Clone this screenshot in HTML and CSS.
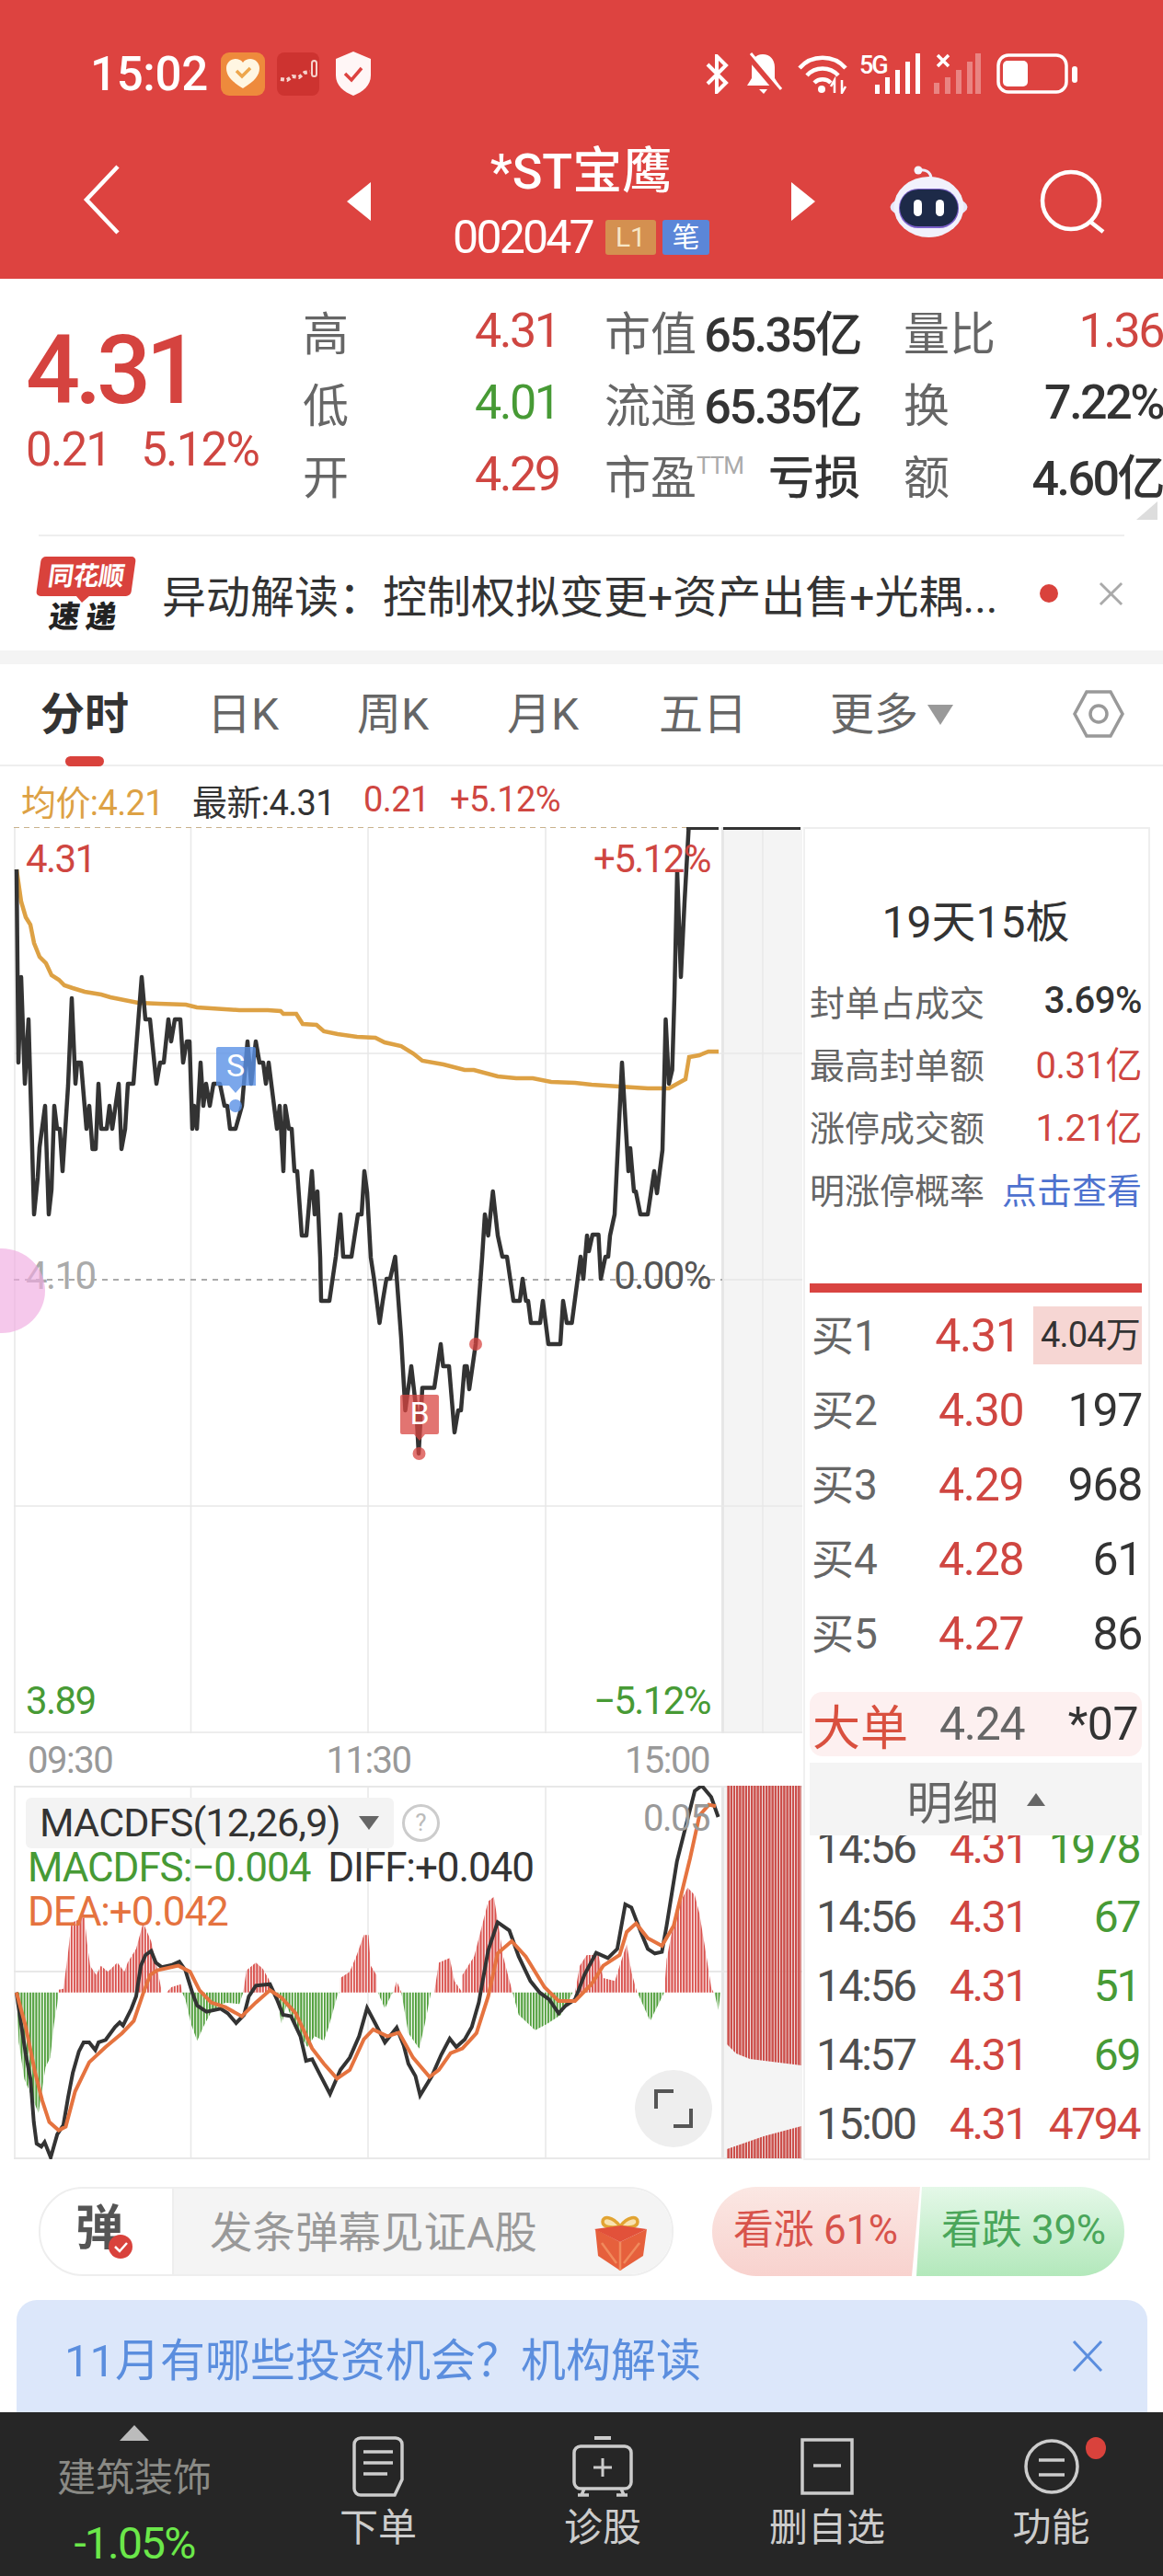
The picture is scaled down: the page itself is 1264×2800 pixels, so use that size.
FILE: index.html
```html
<!DOCTYPE html>
<html lang="zh-CN">
<head>
  <meta charset="UTF-8" />
  <meta name="viewport" content="width=device-width, initial-scale=1" />
  <title>*ST宝鹰 002047</title>
  <link rel="stylesheet" href="styles.css">
</head>
<body>
  <div class="float-ball"></div>

  <header class="header">
    <div class="status-bar">
      <span class="clock">15:02</span>
      <svg class="app-icon" viewBox="0 0 48 47"><rect width="48" height="47" rx="9" fill="#ee8a3c"/><path d="M24 39C11 31 6 25 6 17c0-6 5-10 10-10 3 0 6 1 8 4 2-3 5-4 8-4 5 0 10 4 10 10 0 8-5 14-18 22z" fill="#fff6e2"/><path d="M17 20l6 6 9-9" fill="none" stroke="#eda64c" stroke-width="3.500"/></svg>
      <svg class="app-icon app-icon-dark" viewBox="0 0 46 47"><rect width="46" height="47" rx="8" fill="#cd3330"/><path d="M4 29l7 1 6-4 7 1 6-5 6-1" fill="none" stroke="#f6d3cd" stroke-width="4" stroke-dasharray="4 3"/><rect x="38" y="9" width="5" height="17" rx="2.500" fill="none" stroke="#f6d3cd" stroke-width="2"/></svg>
      <svg class="shield" viewBox="0 0 42 48"><path d="M21 0l19 8v18c0 11-9 18-19 22C11 44 2 37 2 26V8z" fill="#fff6f6"/><path d="M12 24l7 7 11-13" fill="none" stroke="#dd4340" stroke-width="3.500"/></svg>
      <div class="status-right">
        <svg class="st-bt" viewBox="0 0 29 43"><path d="M4 11l20 20-10 10V2l10 10L4 32" fill="none" stroke="#fff" stroke-width="4"/></svg>
        <svg class="st-bell" viewBox="0 0 42 46"><path d="M20 2c8 0 13 6 13 14v12l5 8H3l5-8V16C8 8 12 2 20 2z" fill="#fff"/><path d="M16 40h9l-4 5z" fill="#fff"/><path d="M4 3l33 39" stroke="#dd4340" stroke-width="7"/><path d="M7 1l33 39" stroke="#fff" stroke-width="3"/></svg>
        <svg class="st-wifi" viewBox="0 0 56 43"><path d="M2 15c13-15 37-15 50 0M10 23c9-10 25-10 34 0M18 31c5-5 13-5 18 0" fill="none" stroke="#fff" stroke-width="4.500"/><circle cx="26" cy="38" r="4" fill="#fff"/><path d="M40 42V28l-4 7M48 28v14l4-7" fill="none" stroke="#fff" stroke-width="2.500"/></svg>
        <svg class="st-signal" viewBox="0 0 66 44"><text x="0" y="22" class="st-5g">5G</text><path d="M17 34h5v10h-5zM28 26h5v18h-5zM39 18h5v26h-5zM50 9h5v35h-5zM61 0h5v44h-5z" fill="#fff"/></svg>
        <svg class="st-signal2" viewBox="0 0 51 44"><path d="M4 2l12 12M16 2L4 14" stroke="#fff" stroke-width="3.500"/><path d="M0 32h6v12H0zM12 26h6v18h-6zM24 18h6v26h-6zM36 9h6v35h-6zM45 0h6v44h-6z" fill="#fff" opacity=".35"/></svg>
        <svg class="st-battery" viewBox="0 0 88 44"><rect x="2" y="2" width="74" height="40" rx="11" fill="none" stroke="#fff" stroke-width="3.500"/><rect x="7" y="8" width="27" height="28" rx="5" fill="#fff"/><rect x="82" y="14" width="6" height="18" rx="3" fill="#fff"/></svg>
      </div>
    </div>
    <nav class="nav">
      <svg class="nav-back" viewBox="0 0 41 76"><path d="M38 2L4 38l34 36" fill="none" stroke="#fff" stroke-width="4.500"/></svg>
      <svg class="nav-arrow nav-prev" viewBox="0 0 26 42"><path d="M26 0v42L0 21z" fill="#fff"/></svg>
      <div class="stock-title">
        <div class="stock-name">*ST宝鹰</div>
        <div class="stock-code">002047<span class="tag tag-l1">L1</span><span class="tag tag-bi">笔</span></div>
      </div>
      <svg class="nav-arrow nav-next" viewBox="0 0 26 42"><path d="M0 0v42l26-21z" fill="#fff"/></svg>
      <svg class="nav-robot" viewBox="0 0 85 78"><path d="M45 13C44 7 39 4 32 5" fill="none" stroke="#eef" stroke-width="3"/><circle cx="31" cy="5" r="4.500" fill="#f4f4ff"/><ellipse cx="42.500" cy="45" rx="42" ry="14" fill="#e6e6f8"/><ellipse cx="42.500" cy="45" rx="38" ry="33" fill="#f1f1fc"/><rect x="10" y="25" width="65" height="43" rx="21" fill="#7a5fc8"/><rect x="11" y="26" width="63" height="40" rx="20" fill="#1d2a48"/><rect x="26" y="37" width="9" height="18" rx="4.500" fill="#fff"/><rect x="50" y="37" width="9" height="18" rx="4.500" fill="#fff"/></svg>
      <svg class="nav-search" viewBox="0 0 71 70"><circle cx="34" cy="34" r="31" fill="none" stroke="#fff" stroke-width="4.500"/><path d="M55 57l14 11" stroke="#fff" stroke-width="4.500"/></svg>
    </nav>
  </header>

  <section class="quote">
    <div class="last">
      <div class="last-price">4.31</div>
      <div class="last-change"><span>0.21</span><span>5.12%</span></div>
    </div>
    <div class="quote-grid">
      <span class="q-label">高</span><span class="q-val red">4.31</span>
      <div class="q-pair"><span class="q-label">市值</span><span class="q-val dark">65.35亿</span></div>
      <div class="q-pair"><span class="q-label">量比</span><span class="q-val red">1.36</span></div>
      <span class="q-label">低</span><span class="q-val green">4.01</span>
      <div class="q-pair"><span class="q-label">流通</span><span class="q-val dark">65.35亿</span></div>
      <div class="q-pair"><span class="q-label">换</span><span class="q-val dark">7.22%</span></div>
      <span class="q-label">开</span><span class="q-val red">4.29</span>
      <div class="q-pair"><span class="q-label">市盈<sup class="ttm">TTM</sup></span><span class="q-val dark q-loss">亏损</span></div>
      <div class="q-pair"><span class="q-label">额</span><span class="q-val dark">4.60亿</span></div>
    </div>
    <div class="corner-fold"></div>
  </section>

  <section class="news">
    <div class="news-logo">
      <div class="logo-top">同花顺</div>
      <div class="logo-bottom">速递</div>
    </div>
    <div class="news-text">异动解读&#xFF1A;控制权拟变更+资产出售+光耦...</div>
    <span class="news-dot"></span>
    <svg class="news-close" viewBox="0 0 28 28"><path d="M2 2l24 24M26 2L2 26" stroke="#aaa" stroke-width="3"/></svg>
  </section>

  <div class="tabs">
    <div class="tab tab-active">分时</div>
    <div class="tab tab-day">日K</div>
    <div class="tab tab-week">周K</div>
    <div class="tab tab-month">月K</div>
    <div class="tab tab-five">五日</div>
    <div class="tab tab-more">更多<i class="caret"></i></div>
    <svg class="tab-setting" viewBox="0 0 56 54"><path d="M15 3h26l13 24-13 24H15L2 27z" fill="none" stroke="#999" stroke-width="3.500"/><circle cx="28" cy="27" r="9" fill="none" stroke="#999" stroke-width="3.500"/></svg>
  </div>

  <div class="info-line">
    <span class="info-avg">均价:4.21</span>
    <span class="info-new">最新:4.31</span>
    <span class="info-chg">0.21</span>
    <span class="info-pct">+5.12%</span>
  </div>

  <main class="market">
    <div class="chart-col">
      <div class="price-chart">
        <svg class="chart-svg" viewBox="15 899 858 985">
          <rect x="786" y="899" width="86" height="985" fill="#f4f4f4"/>
          <path d="M785.500 899V1884" stroke="#e6e6e6" stroke-width="3"/>
          <path d="M16 899V1884M207.500 899V1884M400 899V1884M593 899V1884M829 899V1884" stroke="#e8e8e8" stroke-width="1.500"/>
          <path d="M15 1145H872M15 1637H872M15 1883H872" stroke="#e8e8e8" stroke-width="1.500"/>
          <path d="M15 1391H785" stroke="#aaa" stroke-width="2" stroke-dasharray="6 6"/>
          <path d="M785 1391H872" stroke="#e6e6e6" stroke-width="1.500"/>
          <path d="M15 899H746" stroke="#c9b28c" stroke-width="2" stroke-dasharray="6 5"/>
          <path d="M746 900H781M786 900H870" stroke="#333" stroke-width="4"/>
          <polyline class="line-avg" points="18,945 23,980 28,997 33,1005 37,1025 43,1040 50,1047 56,1060 64,1065 70,1071 79,1074 92,1078 110,1081 120,1084 130,1086 150,1090 173,1091 202,1092 214,1095 260,1098 291,1098 305,1099 308,1102 322,1102 329,1113 344,1114 352,1121 367,1124 388,1127 408,1128 418,1133 436,1137 449,1145 459,1153 482,1157 505,1163 515,1163 541,1170 561,1172 579,1172 599,1176 625,1177 643,1179 673,1181 704,1183 727,1183 745,1173 749,1149 760,1147 770,1143 781,1143"/>
          <polyline class="line-price" points="18,945 20,1155 23,1062 27,1178 31,1108 34,1213 37,1320 41,1280 43,1247 49,1202 53,1320 56,1293 59,1202 62,1227 65,1227 68,1273 74,1180 78,1085 82,1178 84,1155 88,1155 94,1227 97,1202 100.500,1249 104,1249 107,1178 110,1227 116,1227 119,1202 122,1227 129,1178 132,1249 136,1227 139,1178 145,1178 154,1062 158,1108 163,1108 170,1178 174,1155 178,1155 183,1108 186,1132 190,1108 196,1108 199,1155 203,1132 206,1132 209,1227 211,1202 214,1227 218,1155 221,1202 224,1178 228,1202 232,1178 239,1178 244,1202 247,1202 250,1227 256,1227 263,1202 269,1132 273,1178 278,1132 282,1155 286,1155 289,1178 292,1155 301,1227 304,1202 308,1273 310,1202 314,1227 317,1227 320,1273 323,1273 328,1343 333,1343 339,1273 342,1320 345,1295 348,1367 349,1414 358,1414 365,1366 370,1320 373,1366 382,1366 389,1320 393,1320 396,1273 399,1296 403,1367 406.500,1390 412.500,1438 416,1414 420,1390 424,1390 429.500,1366 436,1454 440.500,1533 447,1485 452.500,1533 455,1580 459,1508.500 472,1508.500 479,1461 481.600,1485 488,1485 494,1557 498,1533 501,1533 505,1485 507.400,1485 510,1510 517,1461 524,1367 527,1320 530.600,1343 535.700,1295 541,1343 546,1366 551,1366 558,1414 565,1414 568,1390 571.600,1414 574,1414 577,1438 587,1438 590,1414 596,1461 609,1461 612,1414 616,1438 621.500,1438 631,1366 634,1390 638,1343 640,1360 644,1342 650.500,1342 653,1390 658,1366 661,1366 663,1343 668,1320 676,1155 683,1273 685,1248 689,1295 691,1295 696,1320 704,1320 711,1273 714,1297 720,1250 723.500,1108 727,1178 730.600,1163 733,1083 736,947 740,1062 744,980 748.500,900"/>
          <g class="mark-sell">
            <path d="M237 1138h39a2 2 0 0 1 2 2v40h-15l-7 8-7-8h-14v-40a2 2 0 0 1 2-2z"/>
            <circle cx="256" cy="1202" r="7"/>
          </g>
          <text x="256" y="1170" class="mark-text">S</text>
          <g class="mark-buy">
            <path d="M437 1516h38a2 2 0 0 1 2 2v39a2 2 0 0 1-2 2h-13l-6 7-6-7h-13a2 2 0 0 1-2-2v-39a2 2 0 0 1 2-2z"/>
            <circle cx="455.500" cy="1580" r="7"/>
            <circle cx="517" cy="1461" r="7"/>
          </g>
          <text x="456" y="1548" class="mark-text">B</text>
        </svg>
        <span class="axis-label label-tl red">4.31</span>
        <span class="axis-label label-tr red">+5.12%</span>
        <span class="axis-label label-ml">4.10</span>
        <span class="axis-label label-mr">0.00%</span>
        <span class="axis-label label-bl green">3.89</span>
        <span class="axis-label label-br green">&minus;5.12%</span>
      </div>

      <div class="time-axis">
        <span>09:30</span><span>11:30</span><span>15:00</span>
      </div>

      <div class="macd-chart">
        <svg class="chart-svg" viewBox="15 1941 858 406">
          <defs>
            <pattern id="barsRed" width="6.270" height="10" patternUnits="userSpaceOnUse"><rect width="4.200" height="10" fill="#d9524e"/></pattern>
            <pattern id="barsGreen" width="6.270" height="10" patternUnits="userSpaceOnUse"><rect width="4" height="10" fill="#4f9e3a"/></pattern>
            <pattern id="barsSide" width="3.200" height="10" patternUnits="userSpaceOnUse"><rect width="2.400" height="10" fill="#cc4f4b"/></pattern>
          </defs>
          <rect x="786" y="1941" width="86" height="406" fill="#f4f4f4"/>
          <path d="M785.500 1941V2347" stroke="#e6e6e6" stroke-width="3"/>
          <path d="M16 1941V2346M207.500 1941V2346M400 1941V2346M593 1941V2346" stroke="#e8e8e8" stroke-width="1.500"/>
          <path d="M15 1942H872M15 2143H872M15 2346H872" stroke="#e8e8e8" stroke-width="2"/>
          <path fill="url(#barsSide)" d="M790 1941H871V2245L815 2238L800 2232L790 2222z"/>
          <path fill="url(#barsSide)" d="M790 2346V2336L830 2322L871 2311V2346z"/>
          <g transform="translate(0 1880) scale(.5102 .3333)">
            <path fill="url(#barsRed)" d="M125 857V848L135 845L145 728L152 630L180 612L185 690L192 770L205 800L215 770L230 790L250 760L265 790L272 760L290 715L305 630L322 690L335 780L345 857zM355 857L365 840L385 830L388 857zM518 857L525 785L545 760L560 780L573 815L578 857zM725 857V810L745 790L760 735L775 670L785 670L790 770L802 800V857zM838 857L845 820L855 857zM925 857L935 760L958 745L968 820L985 857V800L1010 740L1025 650L1040 560L1052 545L1060 620L1072 740L1082 800L1092 857zM1225 857L1235 770L1250 735L1275 735L1285 810L1310 820L1320 770L1335 700L1345 790L1357 857zM1415 857L1420 750L1440 590L1465 515L1480 540L1490 600L1505 740L1515 840L1520 857z"/>
            <path fill="url(#barsGreen)" d="M35 857L40 1020L52 1140L82 1250L90 1170L97 1100L107 1070L115 960L122 895L125 857zM388 857L395 880L407 960L420 1015L433 970L450 920L480 890L510 895L518 857zM578 857L590 880L600 960L610 900L640 1000L655 1035L670 1000L690 1015L700 970L720 860L725 857zM805 857L820 910L835 860L838 857zM855 857L870 990L893 1040L905 960L918 857zM1092 857L1105 930L1140 980L1165 960L1195 930L1220 857zM1358 857L1385 950L1415 857zM1522 857L1530 915L1535 857z"/>
            <polyline class="line-diff" points="35,857 45,960 55,1060 65,1140 72,1280 78,1350 88,1360 95,1345 108,1395 122,1320 135,1290 145,1200 155,1120 168,1050 178,1020 190,1020 203,1045 210,1020 225,1012 245,970 255,955 262,965 280,910 290,870 300,770 310,735 322,722 332,760 345,775 365,768 382,757 395,785 410,860 420,900 440,920 470,910 485,925 503,957 520,930 530,870 545,835 575,830 590,880 603,930 620,935 640,1000 652,1080 665,1075 680,1120 703,1188 725,1110 745,1070 765,1000 782,908 800,960 820,1020 845,972 860,1030 870,1090 885,1130 895,1193 920,1130 940,1060 958,1008 972,1035 990,1010 1005,970 1020,890 1040,720 1060,628 1085,655 1105,740 1130,820 1150,858 1170,880 1190,925 1205,900 1225,880 1245,800 1270,728 1295,745 1315,715 1332,570 1345,580 1365,660 1380,715 1395,730 1410,725 1420,640 1442,430 1465,290 1480,200 1495,183 1515,220 1530,285"/>
            <polyline class="line-dea" points="35,857 55,970 75,1120 90,1210 105,1280 125,1307 140,1295 160,1180 190,1085 225,1035 260,990 285,950 305,860 320,800 335,785 380,770 405,790 425,850 450,890 480,905 515,935 545,890 575,850 600,875 630,925 665,1040 690,1090 718,1138 745,1110 775,1010 795,978 825,1000 850,988 880,1070 915,1133 935,1110 960,1055 985,1040 1015,990 1040,870 1060,730 1090,690 1120,740 1160,840 1190,885 1225,885 1260,830 1285,770 1320,735 1335,660 1355,632 1380,680 1410,705 1435,640 1470,420 1490,280 1510,245 1525,250"/>
          </g>
        </svg>
        <div class="macd-select">MACDFS(12,26,9)<i class="caret caret-small"></i></div>
        <span class="macd-help">?</span>
        <div class="macd-values">
          <span class="green">MACDFS:&minus;0.004</span><span class="dark">DIFF:+0.040</span>
          <span class="macd-dea">DEA:+0.042</span>
        </div>
        <span class="macd-top">0.05</span>
        <div class="expand-btn">
          <svg viewBox="0 0 44 44"><path d="M22 3H3v19M22 41h19V22" fill="none" stroke="#555" stroke-width="4"/></svg>
        </div>
      </div>
    </div>

    <aside class="side-panel">
      <div class="limit-title">19天15板</div>
      <div class="limit-rows">
        <div class="limit-row"><span>封单占成交</span><b class="dark">3.69%</b></div>
        <div class="limit-row"><span>最高封单额</span><b class="red">0.31亿</b></div>
        <div class="limit-row"><span>涨停成交额</span><b class="red">1.21亿</b></div>
        <div class="limit-row"><span>明涨停概率</span><b class="blue">点击查看</b></div>
      </div>
      <div class="book">
        <div class="book-row"><span class="book-label">买1</span><span class="book-price">4.31</span><span class="book-vol book-vol-top">4.04万</span></div>
        <div class="book-row"><span class="book-label">买2</span><span class="book-price">4.30</span><span class="book-vol">197</span></div>
        <div class="book-row"><span class="book-label">买3</span><span class="book-price">4.29</span><span class="book-vol">968</span></div>
        <div class="book-row"><span class="book-label">买4</span><span class="book-price">4.28</span><span class="book-vol">61</span></div>
        <div class="book-row"><span class="book-label">买5</span><span class="book-price">4.27</span><span class="book-vol">86</span></div>
      </div>
      <div class="big-order"><span class="big-label">大单</span><span class="big-price">4.24</span><span class="big-vol">*07</span></div>
      <div class="detail-head">明细<i class="caret caret-up"></i></div>
      <div class="ticks">
        <div class="tick tick-cut"><span>14:56</span><span class="red">4.31</span><span class="green">1978</span></div>
        <div class="tick"><span>14:56</span><span class="red">4.31</span><span class="green">67</span></div>
        <div class="tick"><span>14:56</span><span class="red">4.31</span><span class="green">51</span></div>
        <div class="tick"><span>14:57</span><span class="red">4.31</span><span class="green">69</span></div>
        <div class="tick"><span>15:00</span><span class="red">4.31</span><span class="red">4794</span></div>
      </div>
    </aside>
  </main>

  <section class="comment-row">
    <div class="danmu">
      <div class="danmu-key">弹<svg class="danmu-badge" viewBox="0 0 26 26"><circle cx="13" cy="13" r="13" fill="#d9423c"/><path d="M7 13l5 5 8-9" fill="none" stroke="#fff" stroke-width="2.500"/></svg></div>
      <div class="danmu-input">
        <span>发条弹幕见证A股</span>
        <svg class="gift" viewBox="0 0 58 60">
          <path d="M28 12C20 1 9 0 9 7c0 6 10 7 19 5zM28 12C36 1 47 0 47 7c0 6-10 7-19 5z" fill="#f9e3b0" stroke="#e2a432" stroke-width="3.500"/>
          <path d="M1 15l3 29 24 16 25-16 4-29-29 14z" fill="#e6603c"/>
          <path d="M0 15l29-4 28 4-29 14z" fill="#e2513a"/>
          <path d="M28 29v31M8 30l16 22M49 30L32 52" stroke="#f08a5c" stroke-width="2.500" fill="none"/>
        </svg>
      </div>
    </div>
    <div class="vote">
      <div class="vote-up">看涨 61%</div>
      <div class="vote-down">看跌 39%</div>
    </div>
  </section>

  <div class="banner">
    <span>11月有哪些投资机会&#xFF1F;机构解读</span>
    <svg class="banner-close" viewBox="0 0 36 36"><path d="M3 2l30 32M33 2L3 34" stroke="#5b8ede" stroke-width="3"/></svg>
  </div>

  <footer class="bottom-bar">
    <div class="sector">
      <i class="caret caret-up caret-light"></i>
      <div class="sector-name">建筑装饰</div>
      <div class="sector-pct">-1.05%</div>
    </div>
    <div class="bar-item">
      <svg class="bar-icon" viewBox="0 0 56 66"><path d="M9 2h38a7 7 0 0 1 7 7v38l-8 17H9a7 7 0 0 1-7-7V9a7 7 0 0 1 7-7z" fill="none" stroke="#ccc" stroke-width="3.500"/><path d="M12 17h32M12 29h32M12 41h26" stroke="#ccc" stroke-width="3.500"/></svg>
      <span>下单</span>
    </div>
    <div class="bar-item">
      <svg class="bar-icon" viewBox="0 0 66 66"><path d="M24 2h18" stroke="#ccc" stroke-width="4"/><rect x="2" y="11" width="62" height="46" rx="7" fill="none" stroke="#ccc" stroke-width="3.500"/><path d="M33 24v20M23 34h20" stroke="#ccc" stroke-width="3"/><path d="M10 64l3-7M56 64l-3-7M6 64h12M48 64h12" stroke="#ccc" stroke-width="3.500"/></svg>
      <span>诊股</span>
    </div>
    <div class="bar-item">
      <svg class="bar-icon" viewBox="0 0 58 66"><rect x="2" y="4" width="54" height="58" fill="none" stroke="#ccc" stroke-width="3.500"/><path d="M14 32h30" stroke="#ccc" stroke-width="3.500"/></svg>
      <span>删自选</span>
    </div>
    <div class="bar-item">
      <svg class="bar-icon" viewBox="0 0 60 66"><circle cx="30" cy="33" r="28" fill="none" stroke="#ccc" stroke-width="3.500"/><path d="M16 26h28M16 42h28" stroke="#ccc" stroke-width="3.500"/></svg>
      <span>功能</span>
      <i class="bar-dot"></i>
    </div>
  </footer>
</body>
</html>
```

FILE: styles.css
```css
* {
  box-sizing: border-box;
}
body {
  margin: 0;
  width: 1264px;
  height: 2800px;
  overflow: hidden;
  position: relative;
  background: #fff;
  color: #333;
  font-family: Roboto, "Noto Sans CJK SC", sans-serif;
}
.red { color: #cf4641; }
.green { color: #479a35; }
.dark { color: #333; }
.blue { color: #4e72cf; }
svg { display: block; }

.float-ball {
  position: absolute;
  left: -46px;
  top: 1357px;
  width: 95px;
  height: 92px;
  border-radius: 50%;
  background: rgba(240, 170, 225, 0.65);
  z-index: 5;
}

/* header */
.header {
  height: 303px;
  padding-top: 56px;
  background: #dd4340;
  color: #fff;
}
.status-bar {
  height: 48px;
  padding-left: 98px;
  display: flex;
  align-items: center;
}
.clock {
  width: 142px;
  font-size: 51px;
  font-weight: 500;
  letter-spacing: -0.300px;
}
.app-icon { width: 48px; height: 47px; }
.app-icon-dark { width: 46px; margin-left: 13px; }
.shield { width: 42px; height: 48px; margin-left: 16px; }
.status-right {
  margin-left: 360px;
  display: flex;
  align-items: center;
}
.st-bt { width: 29px; height: 43px; }
.st-bell { width: 42px; height: 46px; margin-left: 15px; }
.st-wifi { width: 56px; height: 43px; margin-left: 16px; }
.st-signal { width: 66px; height: 44px; margin-left: 11px; overflow: visible; }
.st-5g { font-size: 27px; font-weight: 500; fill: #fff; letter-spacing: -2px; }
.st-signal2 { width: 51px; height: 44px; margin-left: 15px; }
.st-battery { width: 88px; height: 44px; margin-left: 17px; }

.nav {
  height: 122px;
  margin-top: 54px;
  padding-left: 90px;
  display: flex;
  align-items: center;
}
.nav-back { width: 41px; height: 76px; margin-top: -4px; }
.nav-arrow { width: 26px; height: 42px; }
.nav-prev { margin-left: 246px; }
.stock-title { width: 457px; text-align: center; }
.stock-name {
  font-size: 54px;
  font-weight: 500;
  line-height: 60px;
  margin-top: -2px;
}
.stock-code {
  margin-top: 19px;
  font-size: 50px;
  line-height: 44px;
  letter-spacing: -2.800px;
  display: flex;
  justify-content: center;
  align-items: center;
}
.tag {
  width: 55px;
  height: 38px;
  margin-left: 14px;
  font-size: 30px;
  line-height: 38px;
  letter-spacing: 0;
  border-radius: 3px;
  text-align: center;
}
.tag-l1 { background: #d49050; color: #f7e6c6; }
.tag-bi { width: 51px; margin-left: 7px; background: #5b86d8; }
.nav-robot { width: 85px; height: 78px; margin-left: 81px; }
.nav-search { width: 71px; height: 70px; margin-left: 78px; }

/* quote */
.quote {
  height: 278px;
  padding: 17px 0 0 28px;
  display: flex;
  position: relative;
}
.last { width: 301px; }
.last-price {
  margin-top: 38px;
  font-size: 104px;
  line-height: 90px;
  font-weight: 500;
  letter-spacing: -5.500px;
  color: #d5433f;
}
.last-change {
  margin-top: 11px;
  font-size: 51px;
  line-height: 60px;
  letter-spacing: -1.800px;
  color: #cf4641;
  display: flex;
  gap: 33px;
}
.quote-grid {
  display: grid;
  grid-template-columns: 187px 141px 325px 282px;
  grid-auto-rows: 78px;
  align-items: center;
}
.q-label {
  font-size: 50px;
  color: #666;
  white-space: nowrap;
}
.q-val {
  font-size: 52px;
  letter-spacing: -2.500px;
  white-space: nowrap;
}
.q-val.dark { font-weight: 500; }
.q-pair {
  display: flex;
  justify-content: space-between;
  align-items: center;
}
.quote-grid .q-pair:nth-child(4n+3) { padding-right: 47px; }
.q-loss { letter-spacing: 0; font-size: 50px; }
.ttm {
  font-size: 26px;
  color: #aaa;
  vertical-align: 22px;
  line-height: 0;
  letter-spacing: -1px;
}
.corner-fold {
  position: absolute;
  right: 6px;
  top: 242px;
  width: 23px;
  height: 20px;
  background: #ddd;
  clip-path: polygon(100% 0, 100% 100%, 0 100%);
}

/* news */
.news {
  height: 126px;
  margin: 0 42px;
  border-top: 2px solid #eee;
  display: flex;
  align-items: center;
  position: relative;
}
.news-logo { width: 103px; margin-top: 2px; }
.logo-top {
  height: 43px;
  background: #d9423c;
  border-radius: 5px;
  color: #fff;
  font-size: 28px;
  font-weight: 700;
  line-height: 43px;
  text-align: center;
  letter-spacing: -0.500px;
  transform: skewX(-8deg);
  position: relative;
}
.logo-top::after {
  content: "";
  position: absolute;
  left: 44px;
  top: 43px;
  width: 14px;
  height: 7px;
  background: #d9423c;
  clip-path: polygon(0 0, 100% 0, 50% 100%);
}
.logo-bottom {
  margin-top: 6px;
  color: #222;
  font-size: 33px;
  font-weight: 900;
  line-height: 34px;
  text-align: center;
  letter-spacing: 7px;
  transform: skewX(-8deg);
}
.news-text {
  width: 930px;
  margin-left: 31px;
  font-size: 48px;
  white-space: nowrap;
  color: #333;
}
.news-dot {
  width: 20px;
  height: 20px;
  margin-left: 24px;
  border-radius: 50%;
  background: #d9423c;
}
.news-close { width: 27px; height: 27px; margin-left: 44px; }

/* tabs */
.tabs {
  height: 126px;
  border-top: 15px solid #f4f4f4;
  border-bottom: 2px solid #eee;
  position: relative;
}
.tab {
  position: absolute;
  top: 28px;
  font-size: 48px;
  line-height: 54px;
  color: #666;
  white-space: nowrap;
}
.tab-active {
  left: 44px;
  font-weight: 700;
  color: #333;
}
.tab-active::after {
  content: "";
  position: absolute;
  left: 27px;
  top: 72px;
  width: 42px;
  height: 11px;
  border-radius: 6px;
  background: #d9423c;
}
.tab-day { left: 225px; }
.tab-week { left: 388px; }
.tab-month { left: 551px; }
.tab-five { left: 716px; }
.tab-more { left: 902px; display: flex; align-items: center; }
.tab-setting {
  position: absolute;
  left: 1166px;
  top: 27px;
  width: 56px;
  height: 54px;
}
.caret {
  display: block;
  width: 0;
  height: 0;
  margin-left: 10px;
  border-left: 14px solid transparent;
  border-right: 14px solid transparent;
  border-top: 22px solid #999;
}
.caret-small {
  margin-left: 20px;
  border-left-width: 11px;
  border-right-width: 11px;
  border-top: 15px solid #666;
}
.caret-up {
  margin-left: 30px;
  border-left-width: 10px;
  border-right-width: 10px;
  border-top: 0;
  border-bottom: 14px solid #666;
}

.info-line {
  height: 66px;
  padding: 6px 0 0 23px;
  display: flex;
  align-items: center;
  font-size: 38px;
  letter-spacing: -0.600px;
}
.info-avg { width: 186px; color: #dda144; }
.info-new { width: 186px; color: #333; }
.info-chg { width: 94px; color: #cf4641; }
.info-pct { color: #cf4641; }

/* chart + side panel */
.market {
  height: 1449px;
  margin-left: 15px;
  display: flex;
}
.chart-col { width: 858px; }
.price-chart {
  height: 985px;
  position: relative;
}
.chart-svg { width: 100%; height: 100%; }
.line-price {
  fill: none;
  stroke: #333;
  stroke-width: 4.500;
  stroke-linejoin: round;
}
.line-avg {
  fill: none;
  stroke: #dda144;
  stroke-width: 4.500;
}
.mark-sell { fill: rgba(90, 145, 230, 0.8); }
.mark-buy { fill: rgba(216, 70, 66, 0.75); }
.mark-text {
  font-size: 34px;
  fill: #fff;
  text-anchor: middle;
}
.axis-label {
  position: absolute;
  font-size: 42px;
  line-height: 50px;
  letter-spacing: -1.600px;
}
.label-tl { left: 13px; top: 10px; }
.label-tr { right: 101px; top: 10px; }
.label-ml { left: 13px; top: 463px; color: #aaa; }
.label-mr { right: 101px; top: 463px; color: #555; }
.label-bl { left: 13px; top: 925px; }
.label-br { right: 101px; top: 925px; }

.time-axis {
  height: 57px;
  padding: 2px 102px 0 15px;
  display: flex;
  justify-content: space-between;
  align-items: center;
  font-size: 40px;
  letter-spacing: -1.500px;
  color: #999;
}
.macd-chart {
  height: 406px;
  position: relative;
}
.macd-chart .chart-svg { position: absolute; left: 0; top: 0; }
.line-diff,
.line-dea {
  fill: none;
  stroke-width: 4;
  vector-effect: non-scaling-stroke;
}
.line-diff { stroke: #333; }
.line-dea { stroke: #e5733f; }
.macd-select {
  position: absolute;
  left: 13px;
  top: 13px;
  width: 400px;
  height: 55px;
  padding-left: 15px;
  background: #f3f3f3;
  border-radius: 6px;
  font-size: 43px;
  line-height: 55px;
  letter-spacing: -0.800px;
  color: #333;
  display: flex;
  align-items: center;
}
.macd-help {
  position: absolute;
  left: 422px;
  top: 20px;
  width: 41px;
  height: 41px;
  border: 3px solid #ccc;
  border-radius: 50%;
  font-size: 26px;
  line-height: 35px;
  text-align: center;
  color: #bbb;
}
.macd-values {
  position: absolute;
  left: 15px;
  top: 65px;
  width: 640px;
  font-size: 44px;
  line-height: 48px;
  letter-spacing: -1.100px;
}
.macd-values .dark { margin-left: 19px; }
.macd-dea { display: block; color: #e5733f; }
.macd-top {
  position: absolute;
  right: 102px;
  top: 11px;
  font-size: 40px;
  line-height: 50px;
  letter-spacing: -1.500px;
  color: #999;
}
.expand-btn {
  position: absolute;
  left: 675px;
  top: 309px;
  width: 84px;
  height: 84px;
  border-radius: 50%;
  background: #eee;
  display: flex;
  align-items: center;
  justify-content: center;
}
.expand-btn svg { width: 44px; height: 44px; }

.side-panel {
  width: 377px;
  padding: 0 7px 0 5px;
  border: 2px solid #eee;
  border-left-color: #f0f0f0;
  background: #fff;
  overflow: hidden;
}
.limit-title {
  margin-top: 72px;
  font-size: 48px;
  line-height: 60px;
  text-align: center;
  color: #333;
}
.limit-rows { margin-top: 20px; }
.limit-row {
  height: 68px;
  display: flex;
  justify-content: space-between;
  align-items: center;
  font-size: 38px;
  color: #666;
  white-space: nowrap;
}
.limit-row b { font-weight: 400; font-size: 40px; letter-spacing: -0.500px; }
.limit-row b.blue { font-size: 38px; letter-spacing: 0; }
.limit-row b.dark { font-weight: 500; }
.book {
  margin-top: 70px;
  padding-top: 6px;
  border-top: 10px solid #d94441;
}
.book-row {
  height: 81px;
  display: flex;
  align-items: center;
  position: relative;
}
.book-label {
  width: 140px;
  padding-left: 2px;
  font-size: 46px;
  line-height: 56px;
  color: #666;
}
.book-price {
  width: 110px;
  font-size: 50px;
  letter-spacing: -1.300px;
  color: #cf4641;
}
.book-vol {
  margin-left: auto;
  font-size: 50px;
  letter-spacing: -1.300px;
  color: #333;
}
.book-vol-top {
  width: 121px;
  height: 63px;
  margin-left: auto;
  background: #f6d6d3;
  font-size: 38px;
  line-height: 63px;
  text-align: right;
  letter-spacing: -0.800px;
  padding-right: 2px;
}
.big-order {
  height: 70px;
  margin-top: 23px;
  padding-left: 3px;
  padding-right: 4px;
  background: #fdf0f0;
  border-radius: 14px;
  display: flex;
  align-items: center;
}
.big-label { width: 138px; font-size: 52px; color: #d9503f; }
.big-price { font-size: 50px; letter-spacing: -1.300px; color: #666; }
.big-vol { margin-left: auto; font-size: 50px; color: #333; letter-spacing: -0.500px; }
.detail-head {
  height: 79px;
  margin-top: 7px;
  background: #f4f4f4;
  font-size: 50px;
  color: #666;
  display: flex;
  align-items: center;
  justify-content: center;
  position: relative;
  z-index: 1;
}
.ticks { padding: 0 3px 0 7px; }
.tick {
  height: 75px;
  display: grid;
  grid-template-columns: 145px 1fr auto;
  align-items: center;
  font-size: 48px;
  letter-spacing: -2.400px;
  color: #4f4f4f;
}
.tick-cut { margin-top: -24px; }

/* comment row */
.comment-row {
  height: 97px;
  margin: 29px 0 0 42px;
  display: flex;
}
.danmu {
  width: 690px;
  border: 2px solid #eee;
  border-radius: 48px;
  display: flex;
  overflow: hidden;
}
.danmu-key {
  width: 145px;
  font-size: 52px;
  font-weight: 700;
  color: #555;
  padding: 1px 0 0 38px;
  border-right: 2px solid #eee;
  position: relative;
}
.danmu-badge {
  position: absolute;
  left: 74px;
  top: 50px;
  width: 26px;
  height: 26px;
}
.danmu-input {
  flex: 1;
  background: #f4f4f4;
  display: flex;
  align-items: center;
  padding-left: 39px;
  font-size: 46.500px;
  color: #999;
}
.danmu-input span { margin-top: -6px; }
.gift { width: 58px; height: 60px; margin-left: 62px; margin-top: 25px; }
.vote {
  width: 448px;
  margin-left: 42px;
  display: flex;
  font-size: 44px;
  line-height: 94px;
  letter-spacing: -0.300px;
}
.vote-up {
  width: 226px;
  padding-left: 23px;
  border-radius: 48px 0 0 48px;
  background: linear-gradient(#fbe7e3, #f8d2ce);
  color: #d8534b;
  clip-path: polygon(0 0, 100% 0, 96% 100%, 0 100%);
  white-space: nowrap;
}
.vote-down {
  width: 226px;
  margin-left: -4px;
  padding-left: 27px;
  border-radius: 0 48px 48px 0;
  background: linear-gradient(#e4f8e8, #b3e8bb);
  color: #4aa65a;
  clip-path: polygon(6px 0, 100% 0, 100% 100%, 0 100%);
  white-space: nowrap;
}

.banner {
  height: 122px;
  margin: 26px 17px 0 18px;
  padding: 0 47px 0 52px;
  background: #dce7fa;
  border-radius: 22px 22px 0 0;
  display: flex;
  justify-content: space-between;
  align-items: center;
  font-size: 49px;
  color: #5b8ede;
}
.banner-close { width: 36px; height: 36px; }

.bottom-bar {
  height: 179px;
  background: #262626;
  display: grid;
  grid-template-columns: 289px 244px 244px 244px 243px;
  color: #ccc;
}
.sector {
  width: 292px;
  display: flex;
  flex-direction: column;
  align-items: center;
}
.caret-light {
  margin: 14px 0 0 0;
  border-left-width: 16px;
  border-right-width: 16px;
  border-bottom: 17px solid #bbb;
}
.sector-name {
  margin-top: 16px;
  font-size: 42px;
  line-height: 50px;
  color: #8a8a85;
}
.sector-pct {
  margin-top: 21px;
  font-size: 48px;
  line-height: 50px;
  letter-spacing: -1.800px;
  color: #6be84a;
}
.bar-item {
  padding-top: 26px;
  display: flex;
  flex-direction: column;
  align-items: center;
  font-size: 42px;
  line-height: 50px;
  position: relative;
}
.bar-icon { width: 66px; height: 66px; margin-bottom: 9px; }
.bar-dot {
  position: absolute;
  left: 159px;
  top: 27px;
  width: 22px;
  height: 24px;
  border-radius: 50%;
  background: #d9423c;
}
```
